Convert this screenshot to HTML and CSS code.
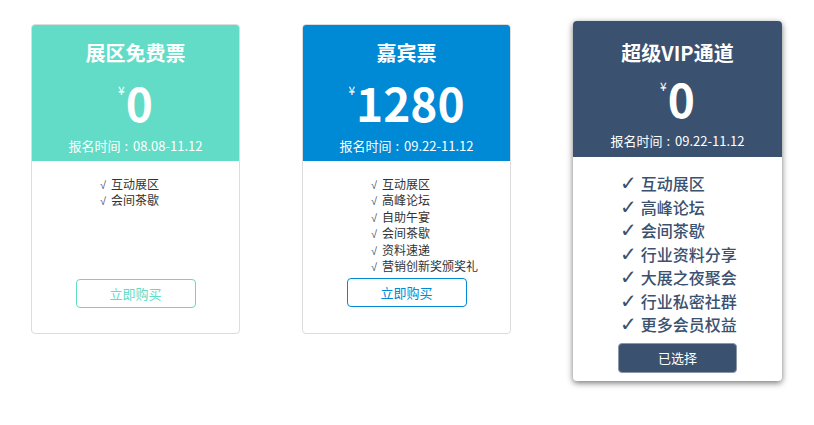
FILE: index.html
```html
<!DOCTYPE html>
<html lang="zh-CN">
<head>
<meta charset="utf-8">
<title>票种选择</title>
<link rel="stylesheet" href="styles.css">
</head>
<body>
<div class="plans">
  <div class="card card-green">
    <div class="card-head">
      <div class="title">展区免费票</div>
      <div class="price"><span class="yen">¥</span><span class="num">0</span></div>
      <div class="date">报名时间<span class="colon">:</span>08.08-11.12</div>
    </div>
    <div class="card-body">
      <ul class="features">
        <li><span class="ck">√</span>互动展区</li>
        <li><span class="ck">√</span>会间茶歇</li>
      </ul>
      <button class="btn">立即购买</button>
    </div>
  </div>
  <div class="card card-blue">
    <div class="card-head">
      <div class="title">嘉宾票</div>
      <div class="price"><span class="yen">¥</span><span class="num">1280</span></div>
      <div class="date">报名时间<span class="colon">:</span>09.22-11.12</div>
    </div>
    <div class="card-body">
      <ul class="features">
        <li><span class="ck">√</span>互动展区</li>
        <li><span class="ck">√</span>高峰论坛</li>
        <li><span class="ck">√</span>自助午宴</li>
        <li><span class="ck">√</span>会间茶歇</li>
        <li><span class="ck">√</span>资料速递</li>
        <li><span class="ck">√</span>营销创新奖颁奖礼</li>
      </ul>
      <button class="btn">立即购买</button>
    </div>
  </div>
  <div class="card card-vip">
    <div class="card-head">
      <div class="title">超级VIP通道</div>
      <div class="price"><span class="yen">¥</span><span class="num">0</span></div>
      <div class="date">报名时间<span class="colon">:</span>09.22-11.12</div>
    </div>
    <div class="card-body">
      <ul class="features">
        <li><span class="ck">✓</span>互动展区</li>
        <li><span class="ck">✓</span>高峰论坛</li>
        <li><span class="ck">✓</span>会间茶歇</li>
        <li><span class="ck">✓</span>行业资料分享</li>
        <li><span class="ck">✓</span>大展之夜聚会</li>
        <li><span class="ck">✓</span>行业私密社群</li>
        <li><span class="ck">✓</span>更多会员权益</li>
      </ul>
      <button class="btn">已选择</button>
    </div>
  </div>
</div>
</body>
</html>
```

FILE: styles.css
```css
* { box-sizing: border-box; }
html, body { margin: 0; padding: 0; background: #fff; }
body {
  font-family: "Noto Sans CJK SC", "Noto Sans", sans-serif;
  width: 814px;
  height: 425px;
  overflow: hidden;
}
.plans {
  display: flex;
  align-items: flex-start;
  gap: 62px;
  padding: 24px 0 0 31px;
}
.card {
  width: 209px;
  height: 310px;
  border: 1px solid #dcdcdc;
  border-radius: 4px;
  overflow: hidden;
  background: #fff;
  display: flex;
  flex-direction: column;
}
.card-head {
  height: 137px;
  color: #fff;
  text-align: center;
  padding-top: 16px;
  margin: -1px -1px 0;
}
.card-green .card-head { background: #62dcc6; }
.card-blue .card-head { background: #0089d5; }
.title {
  font-size: 20px;
  font-weight: 700;
  line-height: 26px;
}
.price {
  margin-top: 9px;
  height: 54px;
  line-height: 54px;
  display: flex;
  justify-content: center;
  align-items: flex-start;
}
.yen {
  font-size: 12px;
  line-height: 12px;
  margin-top: 9px;
  margin-right: 1px;
}
.num {
  font-size: 46px;
  font-weight: 700;
  line-height: 54px;
}
.date {
  margin-top: 8px;
  font-size: 13px;
  line-height: 18px;
}
.colon {
  margin: 0 5px 0 4px;
}
.card-body {
  flex: 1;
  display: flex;
  flex-direction: column;
  padding-top: 15px;
}
.features {
  list-style: none;
  margin: 0;
  padding: 0 0 0 68px;
  height: 102px;
  font-size: 12px;
  color: #333;
}
.features li {
  height: 16.4px;
  line-height: 16.4px;
  white-space: nowrap;
}
.ck {
  display: inline-block;
  font-family: "Liberation Sans", sans-serif;
  font-size: 11px;
  line-height: 1;
  color: #3a4a66;
  margin-right: 5px;
}
.btn {
  align-self: center;
  width: 120px;
  height: 29px;
  margin-top: 1px;
  background: #fff;
  border-radius: 4px;
  font-family: inherit;
  font-size: 13px;
  padding: 0;
  cursor: pointer;
}
.card-green .btn { border: 1px solid #62dcc6; color: #62dcc6; }
.card-blue .btn { border: 1px solid #0089d5; color: #0089d5; margin-top: 0; }

.card-vip {
  height: 360px;
  margin-top: -3px;
  border: none;
  box-shadow: 0 2px 6px rgba(0, 0, 0, 0.55);
}
.card-vip .card-head {
  background: #3b5170;
  margin: 0;
  height: 136px;
  padding-top: 19px;
}
.card-vip .price { margin-top: 5px; }
.card-vip .date { margin-top: 7px; }
.card-vip .card-body { padding-top: 15px; }
.card-vip .features {
  padding-left: 47px;
  height: auto;
  font-size: 16px;
  font-weight: 500;
  color: #3b5170;
}
.card-vip .features li {
  height: 23.5px;
  line-height: 23.5px;
}
.card-vip .ck {
  font-family: "DejaVu Sans", sans-serif;
  font-size: 20px;
  color: #3b5170;
  margin-right: 4px;
}
.card-vip .btn {
  width: 119px;
  height: 30px;
  margin-top: 6px;
  background: #3b5170;
  border: 1px solid #8a96a8;
  color: #fff;
}
```
